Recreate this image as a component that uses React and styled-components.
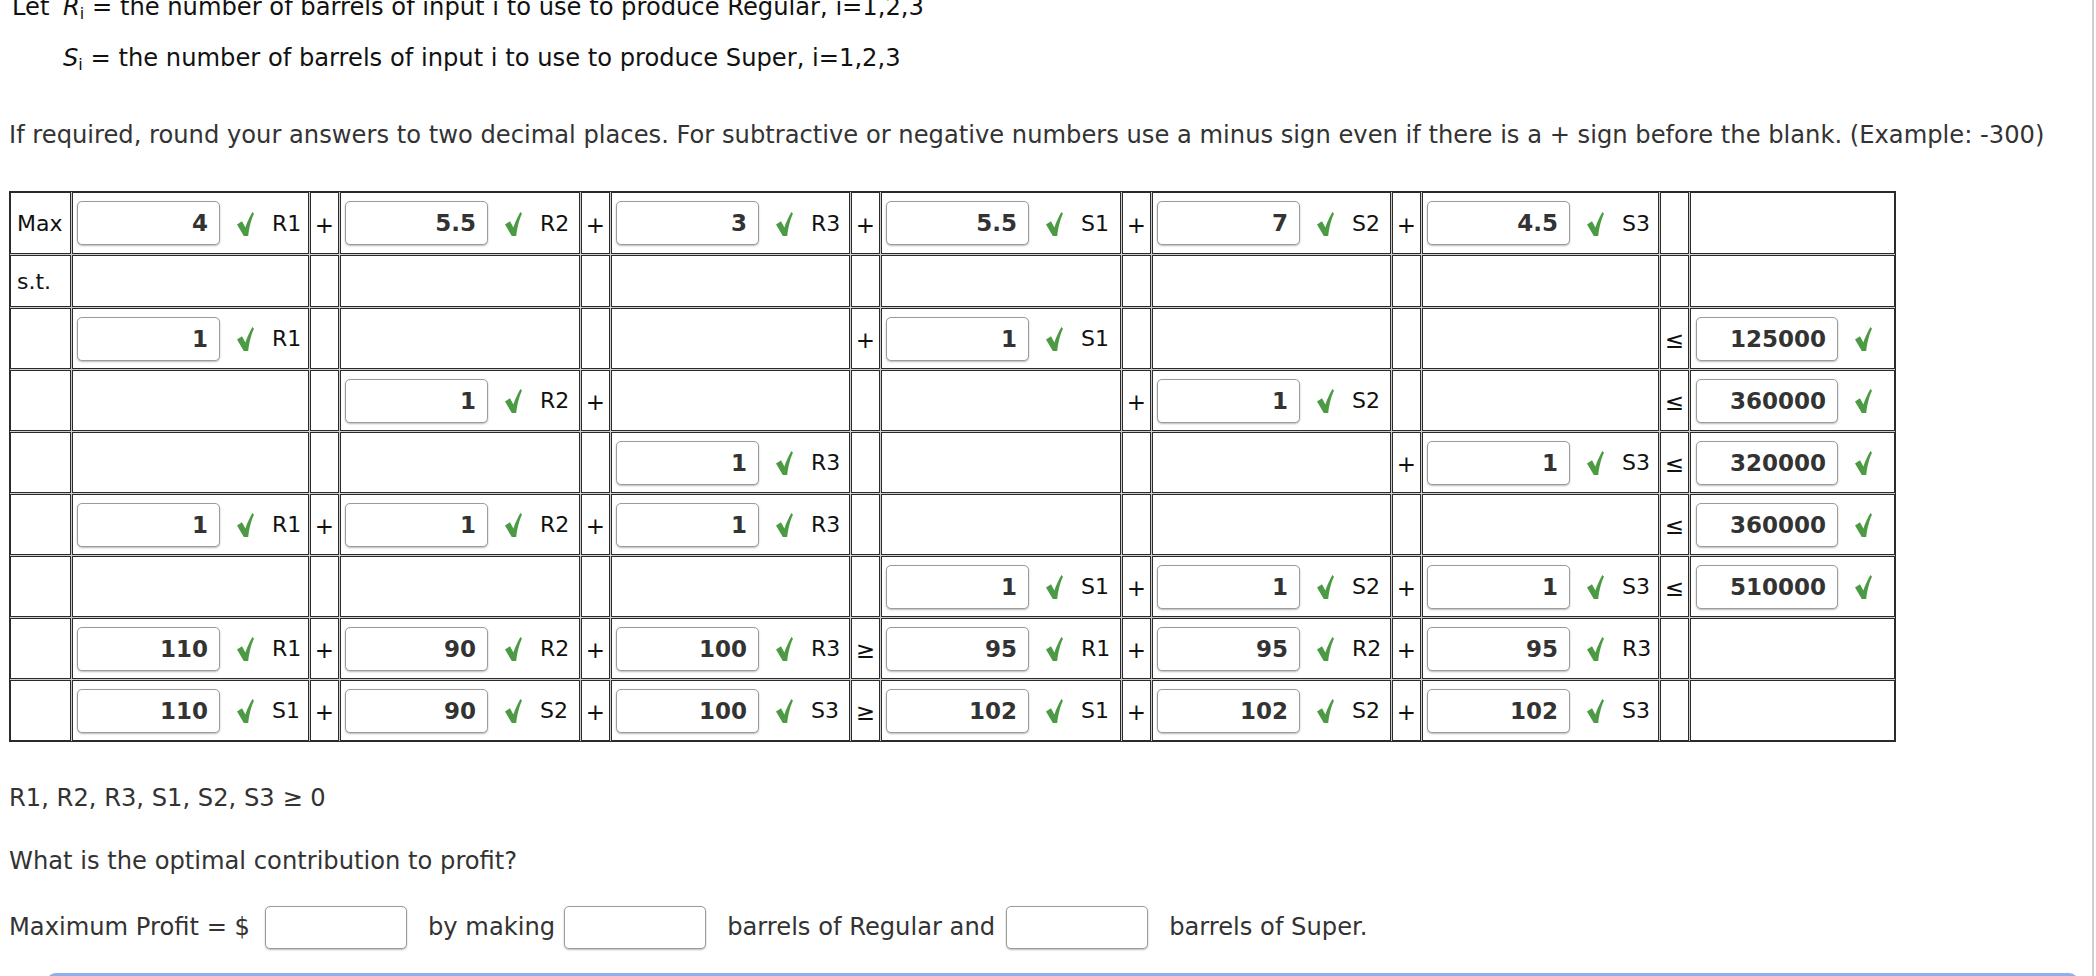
import React from 'react';
import styled, { createGlobalStyle } from 'styled-components';

const GlobalStyle = createGlobalStyle`
  html, body { margin: 0; padding: 0; background: #fff; }
  body {
    font-family: "DejaVu Sans", Verdana, sans-serif;
    font-size: 24.2px;
    color: #333;
    overflow: hidden;
  }
`;

const Page = styled.div`
  box-sizing: border-box;
  width: 2094px;
  height: 976px;
  padding-left: 9px;
  border-right: 2px solid #d0d0d0;
  overflow: hidden;
`;

const Intro = styled.div`
  margin-top: -6px;
  padding-left: 3px;
  display: grid;
  grid-template-columns: 51px auto;
  row-gap: 25px;
  line-height: 26px;
  color: #111;
`;

const MathVar = styled.i`
  font-style: italic;
`;

const Sub = styled.sub`
  font-size: 0.66em;
  vertical-align: -0.25em;
  line-height: 0;
`;

const Para = styled.p`
  margin: ${p => p.$top}px 0 0 0;
  line-height: 26px;
  color: #333;
`;

const Grid = styled.div`
  margin-top: 43px;
  display: grid;
  grid-template-columns: 61px 237px 29px 240px 29px 239px 29px 240px 29px 239px 29px 237px 29px 205px;
  grid-template-rows: 62px 52px repeat(7, 61px);
  gap: 1px;
  width: max-content;
  background: #cdcdcd;
  border: 1px solid #2b2b2b;
  color: #111;
  font-size: 22px;
`;

const Cell = styled.div`
  box-sizing: border-box;
  border: 1px solid #2b2b2b;
  background: #fff;
  display: flex;
  align-items: center;
`;

const LabelCell = styled(Cell)`
  padding-left: 6px;
`;

const TermCell = styled(Cell)`
  padding-left: 4px;
`;

const OpCell = styled(Cell)`
  justify-content: center;
  padding-top: 3px;
  font-size: 23px;
`;

const RhsCell = styled(Cell)`
  padding-left: 5px;
`;

const ValueBox = styled.input`
  box-sizing: border-box;
  width: ${p => p.$w || 143}px;
  height: 44px;
  margin: 0;
  padding: 0 11px 0 0;
  border: 1px solid #9c9c9c;
  border-radius: 5px;
  box-shadow: 0 1px 2px rgba(0, 0, 0, 0.28);
  background: #fff;
  font-family: "DejaVu Sans", Verdana, sans-serif;
  font-weight: bold;
  font-size: 23px;
  color: #333;
  text-align: right;
  outline: none;
`;

const CheckSvg = styled.svg`
  flex: none;
  width: 17px;
  height: 24px;
  margin-left: 17px;
  margin-top: 1px;
`;

const VarName = styled.span`
  margin-left: 18px;
  white-space: nowrap;
`;

const Check = () => (
  <CheckSvg viewBox="0 0 17 24">
    <path
      d="M0 12.6 L5 9.2 L8.4 15.4 C10.2 10 12.8 4.6 15.4 0 L17 1.8 C14.4 7.2 12.4 14 11.2 24 L6.8 24 Z"
      fill="#4c9b44"
    />
  </CheckSvg>
);

const AnswerRow = styled.div`
  margin-top: 31px;
  display: flex;
  align-items: center;
  height: 44px;
  color: #333;
  white-space: pre;
`;

const AnswerBox = styled.input`
  box-sizing: border-box;
  width: 142px;
  height: 43px;
  margin: 0 21px 0 ${p => p.$left}px;
  border: 1px solid #9c9c9c;
  border-radius: 5px;
  box-shadow: 0 1px 2px rgba(0, 0, 0, 0.28);
  background: #fff;
  outline: none;
`;

const NextPanel = styled.div`
  margin: 24px 13px 0 37px;
  height: 40px;
  border: 3px solid #8eafea;
  border-radius: 10px;
`;

const N = null;
const rows = [
  { label: 'Max', terms: [['4', 'R1'], ['5.5', 'R2'], ['3', 'R3'], ['5.5', 'S1'], ['7', 'S2'], ['4.5', 'S3']], ops: ['+', '+', '+', '+', '+', ''], rhs: N },
  { label: 's.t.', terms: [N, N, N, N, N, N], ops: ['', '', '', '', '', ''], rhs: N },
  { label: '', terms: [['1', 'R1'], N, N, ['1', 'S1'], N, N], ops: ['', '', '+', '', '', '≤'], rhs: '125000' },
  { label: '', terms: [N, ['1', 'R2'], N, N, ['1', 'S2'], N], ops: ['', '+', '', '+', '', '≤'], rhs: '360000' },
  { label: '', terms: [N, N, ['1', 'R3'], N, N, ['1', 'S3']], ops: ['', '', '', '', '+', '≤'], rhs: '320000' },
  { label: '', terms: [['1', 'R1'], ['1', 'R2'], ['1', 'R3'], N, N, N], ops: ['+', '+', '', '', '', '≤'], rhs: '360000' },
  { label: '', terms: [N, N, N, ['1', 'S1'], ['1', 'S2'], ['1', 'S3']], ops: ['', '', '', '+', '+', '≤'], rhs: '510000' },
  { label: '', terms: [['110', 'R1'], ['90', 'R2'], ['100', 'R3'], ['95', 'R1'], ['95', 'R2'], ['95', 'R3']], ops: ['+', '+', '≥', '+', '+', ''], rhs: N },
  { label: '', terms: [['110', 'S1'], ['90', 'S2'], ['100', 'S3'], ['102', 'S1'], ['102', 'S2'], ['102', 'S3']], ops: ['+', '+', '≥', '+', '+', ''], rhs: N },
];

export default function App() {
  return (
    <>
      <GlobalStyle />
      <Page>
        <Intro>
          <span>Let</span>
          <span>
            <MathVar>R</MathVar><Sub>i</Sub> = the number of barrels of input i to use to produce Regular, i=1,2,3
          </span>
          <span />
          <span>
            <MathVar>S</MathVar><Sub>i</Sub> = the number of barrels of input i to use to produce Super, i=1,2,3
          </span>
        </Intro>
        <Para $top={51}>
          If required, round your answers to two decimal places. For subtractive or negative numbers use a minus sign even if there is a + sign before the blank. (Example: -300)
        </Para>
        <Grid>
          {rows.map((row, r) => (
            <React.Fragment key={r}>
              <LabelCell>{row.label}</LabelCell>
              {row.terms.map((t, i) => (
                <React.Fragment key={i}>
                  <TermCell>
                    {t && (
                      <>
                        <ValueBox readOnly value={t[0]} />
                        <Check />
                        <VarName>{t[1]}</VarName>
                      </>
                    )}
                  </TermCell>
                  {i < 6 && <OpCell>{row.ops[i]}</OpCell>}
                </React.Fragment>
              ))}
              <RhsCell>
                {row.rhs && (
                  <>
                    <ValueBox readOnly value={row.rhs} $w={142} />
                    <Check />
                  </>
                )}
              </RhsCell>
            </React.Fragment>
          ))}
        </Grid>
        <Para $top={43}>R1, R2, R3, S1, S2, S3 ≥ 0</Para>
        <Para $top={37}>What is the optimal contribution to profit?</Para>
        <AnswerRow>
          <span>Maximum Profit = $</span>
          <AnswerBox readOnly $left={15} />
          <span>by making</span>
          <AnswerBox readOnly $left={9} />
          <span>barrels of Regular and</span>
          <AnswerBox readOnly $left={11} />
          <span>barrels of Super.</span>
        </AnswerRow>
        <NextPanel />
      </Page>
    </>
  );
}
